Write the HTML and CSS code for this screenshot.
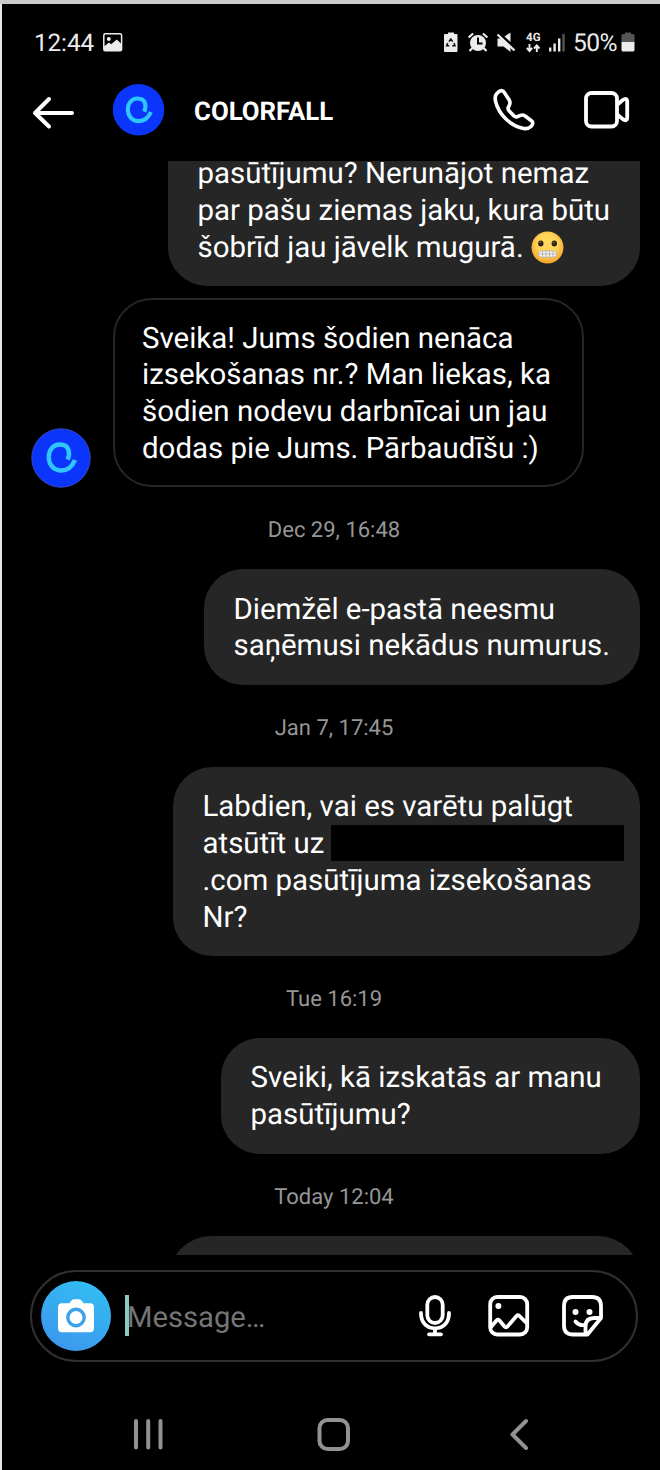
FILE: index.html
```html
<!DOCTYPE html>
<html lang="lv">
<head>
<meta charset="utf-8">
<title>COLORFALL</title>
<link rel="stylesheet" href="styles.css">
</head>
<body>
<div class="phone">
  <div class="status">
    <span class="clock">12:44</span>
    <svg class="status-photo" width="20" height="19" viewBox="0 0 20 19"><rect x=".8" y=".8" width="17.8" height="17" rx="1.6" fill="none" stroke="#ececec" stroke-width="1.5"/><circle cx="5.8" cy="6" r="2" fill="#ececec"/><path d="M1 13.5 6 9.5l2.2 1.800L13.800 6.500 18.500 11v7H1z" fill="#ececec"/></svg>
    <svg class="status-icons" width="130" height="24" viewBox="442 30 130 24" fill="#ececec">
      <path d="M448 34v-1.500h6V34h2.500q1 0 1 1v16q0 1-1 1h-11.500q-1 0-1-1V35q0-1 1-1z"/>
      <path d="M448.900 41.600l1.900-2.600 1.900 2.600M454 43l1 2.800h-2.800M447.600 43l-1 2.800h2.600" fill="none" stroke="#111" stroke-width="1.500"/>
      <circle cx="478" cy="43" r="8"/><path d="M468.600 37.500l4.500-4M487.400 37.500l-4.500-4M472.500 48l-3 3M483.500 48l3 3" stroke="#ececec" stroke-width="2.200"/>
      <path d="M478 37.500V43.500h4.500" fill="none" stroke="#000" stroke-width="2"/>
      <path d="M497.500 38.500h4l9 8.500v5l-7-5.500h-6z"/><path d="M504.500 36.500l6-4v9.500z"/><path d="M499 33.500L515.500 49" stroke="#000" stroke-width="1.600"/><path d="M497.500 34.500l17 16" stroke="#ececec" stroke-width="2.200"/>
      <text class="net" x="526" y="41.200" textLength="14.500">4G</text>
      <path d="M529.500 44v6M526.800 48l2.700 3 2.700-3M536.800 52v-6M534 48.500l2.800-3 2.700 3" fill="none" stroke="#ececec" stroke-width="1.900"/>
      <path d="M549 47.500h2.400v4H549zM553.400 43.500h2.400v8h-2.400zM558 38.500h2.400v13H558z"/><path d="M562.300 34h2.400v17.500h-2.400z" fill="#555"/>
    </svg>
    <span class="percent">50%</span>
    <svg class="battery" width="14" height="20" viewBox="0 0 14 20"><path d="M4 2V.5h6V2h2q1.500 0 1.500 1.500V10H.5V3.500Q.5 2 2 2z" fill="#555"/><path d="M.5 10h13v8q0 1.500-1.500 1.500H2Q.5 19.500.5 18z" fill="#ececec"/></svg>
  </div>

  <header class="header">
    <svg class="back" width="44" height="34" viewBox="0 0 44 34" fill="none" stroke="#fff" stroke-width="4" stroke-linecap="round" stroke-linejoin="round"><path d="M17 3 3 17l14 13.500M3 17h37"/></svg>
    <svg class="head-avatar" width="52" height="52" viewBox="0 0 60 60"><circle cx="30.600" cy="29.700" r="29.700" fill="#0b35fb"/><path d="M37.200 32C39.500 26.500 40 16.800 29.300 16.800 22.500 16.800 18.300 22.300 18.300 29.300c0 8 5.200 13.500 12.500 13.500 6.700 0 11.500-4.500 14-10.500" fill="none" stroke="#2fc7fb" stroke-width="4.700"/></svg>
    <h1 class="name">COLORFALL</h1>
    <svg class="call" width="44" height="44" viewBox="492 88 44 44" fill="none" stroke="#fff" stroke-width="3.600" stroke-linejoin="round"><path d="M502 90.700c-1.500-.3-3.400 1-5 2.600-1.900 2-2.200 5-1.400 8.200 3 12.600 14.600 24.500 28 27 2.900.5 5.400-.1 7.300-2 2.200-2.200 2.600-4.200.5-5.800l-6.300-4.700c-1.500-1.100-2.900-1.200-4.500-.6l-3.400 1.300c-1 .4-2.200.1-3.200-.8l-4.800-4.900c-1.200-1.300-1.500-2.400-.9-3.600l1.200-2.700c.8-1.800.5-3.500-.6-5.200l-4.600-7.100c-.6-.9-1.300-1.500-2.300-1.700z"/></svg>
    <svg class="video" width="48" height="40" viewBox="583 90 48 40" fill="none" stroke="#fff" stroke-width="3.800" stroke-linejoin="round"><rect x="586" y="93" width="31" height="33.500" rx="5.500"/><path d="M617.500 104.500l5-4.200c3-2.200 4.700-1.600 4.700 1.300v16c0 2.900-1.700 3.500-4.700 1.300l-5-4.200"/></svg>
  </header>

  <main class="chat">
    <div class="bubble sent first">pasūtījumu? Nerunājot nemaz<br>par pašu ziemas jaku, kura būtu<br>šobrīd jau jāvelk mugurā. <svg class="emoji" width="33" height="33" viewBox="0 0 33 33"><defs><radialGradient id="face" cx=".5" cy=".4" r=".6"><stop offset=".5" stop-color="#ffd65a"/><stop offset="1" stop-color="#f5a22c"/></radialGradient></defs><circle cx="16.500" cy="16.500" r="16" fill="url(#face)"/><ellipse cx="9.800" cy="12.500" rx="2.700" ry="3" fill="#302012"/><ellipse cx="23.300" cy="12.500" rx="2.700" ry="3" fill="#302012"/><circle cx="9.200" cy="11.500" r=".8" fill="#987"/><circle cx="22.700" cy="11.500" r=".8" fill="#987"/><rect x="7.500" y="19.800" width="18" height="6.400" rx="2.800" fill="#f4f4f4" stroke="#b9a98a" stroke-width=".8"/><path d="M8 23h17M11.500 20v6M15 20v6M18.500 20v6M22 20v6" stroke="#a9a9a9" stroke-width=".8"/></svg></div>
    <div class="incoming">
      <svg class="avatar" width="60" height="60" viewBox="0 0 60 60"><circle cx="30" cy="30" r="29.200" fill="#0b35fb" stroke="#3446c4"/><path d="M36.600 31.700C38.900 26.200 39.500 16.500 28.800 16.500 22 16.500 17.800 22 17.800 29c0 8 5.200 13.500 12.500 13.500 6.700 0 11.200-4.500 13.700-10.500" fill="none" stroke="#2fc7fb" stroke-width="4.500"/></svg>
      <div class="bubble received">Sveika! Jums šodien nenāca<br>izsekošanas nr.? Man liekas, ka<br>šodien nodevu darbnīcai un jau<br>dodas pie Jums. Pārbaudīšu :)</div>
    </div>
    <time class="date">Dec 29, 16:48</time>
    <div class="bubble sent w436">Diemžēl e-pastā neesmu<br>saņēmusi nekādus numurus.</div>
    <time class="date">Jan 7, 17:45</time>
    <div class="bubble sent w467">Labdien, vai es varētu palūgt<br><span class="redacted-line">atsūtīt uz<span class="redacted"></span></span>.com pasūtījuma izsekošanas<br>Nr?</div>
    <time class="date">Tue 16:19</time>
    <div class="bubble sent w419">Sveiki, kā izskatās ar manu<br>pasūtījumu?</div>
    <time class="date">Today 12:04</time>
    <div class="bubble sent next"></div>
  </main>

  <div class="composer">
    <div class="camera"><svg width="38" height="36" viewBox="0 0 38 36"><path d="M12.500 5.200 14 3q1.200-1.800 3-1.800h5q1.800 0 3 1.800l1.500 2.200H33q4 0 4 4v21q0 4-4 4H5q-4 0-4-4v-21q0-4 4-4z" fill="#fff"/><circle cx="19" cy="19.500" r="8.200" fill="none" stroke="#3da2ec" stroke-width="3.400"/></svg></div>
    <span class="caret"></span>
    <span class="placeholder">Message…</span>
    <svg class="tools" width="190" height="48" viewBox="416 1292 190 48" fill="none" stroke="#fff" stroke-width="3.800" stroke-linecap="round" stroke-linejoin="round">
      <rect x="427.300" y="1297" width="15.400" height="26" rx="7.700"/><path d="M421 1313c0 9 5 15.300 14 15.300s14-6.300 14-15.300M435 1329v5M429 1334.300h12"/>
      <rect x="490.200" y="1297" width="37" height="37.500" rx="7"/><circle cx="498.400" cy="1306" r="3" fill="#fff" stroke="none"/><path d="M491 1327l5.500-6.500q1.500-1.500 3 0l5 6q1.500 1.700 3 0l9-10.500q1.500-1.500 3 0l7 7"/>
      <path d="M601 1318v-12q0-9-9-9h-19.500q-8.500 0-8.500 9v19.500q0 9 9 9h14.500zM601 1318h-7q-8.500 0-8.500 8.500v7.500"/><path d="M575.500 1321.500q3.500 4.500 10 3.500"/><circle cx="575.500" cy="1312" r="3" fill="#fff" stroke="none"/><circle cx="589.500" cy="1312" r="3" fill="#fff" stroke="none"/>
    </svg>
  </div>

  <nav class="nav">
    <svg width="392" height="36" viewBox="132 1416 392 36" fill="none" stroke="#929292" stroke-width="4" stroke-linecap="round" stroke-linejoin="round"><path d="M136 1421v26.500M148.200 1421v26.500M160.500 1421v26.500M526 1421l-13.500 13.500 13.500 13.500"/><rect x="319.500" y="1420" width="28.500" height="29" rx="8"/></svg>
  </nav>
</div>
</body>
</html>
```
FILE: styles.css
```css
* { box-sizing: border-box; }
body {
  margin: 0;
  background: #d5d5d5;
  font-family: Roboto, "Noto Sans", sans-serif;
  text-rendering: geometricPrecision;
  color: #fff;
}
svg { display: block; flex: none; overflow: visible; }
.phone {
  width: 660px;
  height: 1470px;
  padding: 4px 0 0 2px;
  overflow: hidden;
  display: flex;
  flex-direction: column;
  background: linear-gradient(#000, #000) 2px 4px no-repeat, linear-gradient(#cbcbcb, #cbcbcb) 0 0 / 100% 4px no-repeat, #e4e8e8;
}
.status {
  height: 76px;
  padding: 0 25px 0 32px;
  display: flex;
  align-items: center;
  font-size: 24.3px;
  color: #ececec;
}
.clock { width: 60px; letter-spacing: -0.1px; white-space: nowrap; }
.status-photo { margin-left: 9px; }
.status-icons { margin-left: auto; }
.net { font-size: 11.5px; font-weight: 700; }
.percent { width: 45px; margin-left: 1px; padding-top: 2px; font-size: 24.6px; letter-spacing: -0.6px; white-space: nowrap; }
.battery { margin-left: 3px; }
.header {
  height: 81px;
  padding: 0 29px 0 30px;
  display: flex;
  align-items: center;
}
.back { margin-top: -16px; }
.head-avatar { margin: -22px 0 0 36px; }
.name { margin: -17px 0 0 30px; font-size: 25.8px; line-height: 36px; font-weight: 700; white-space: nowrap; }
.call { margin: -21px 0 0 auto; }
.video { margin: -21px 0 0 47px; }
.chat {
  height: 1094px;
  padding: 0 20px 0 29px;
  display: flex;
  flex-direction: column;
  overflow: hidden;
  flex: none;
}
.bubble {
  flex: none;
  padding: 22.5px 30px 19.5px 29.5px;
  border-radius: 39px;
  font-size: 29.45px;
  line-height: 36.8px;
  white-space: nowrap;
}
.sent { align-self: flex-end; background: #262626; }
.first { width: 472px; height: 125px; padding-top: 0; padding-bottom: 0; border-radius: 0 0 39px 39px; }
.first::before { content: ""; display: block; margin-top: -5px; }
.emoji { display: inline-block; margin: -6px 0 0 0; vertical-align: -7px; }
.incoming { display: flex; align-items: flex-end; margin-top: 12px; }
.avatar { margin-bottom: -1px; }
.received { width: 471px; margin-left: 22px; padding: 20.5px 27.5px 17.5px 27px; border: 2px solid #262626; }
.w436 { width: 436px; }
.w467 { width: 467px; }
.w419 { width: 419px; }
.date {
  height: 82px;
  flex: none;
  padding: 2px 3px 0 0;
  text-align: center;
  line-height: 84px;
  font-size: 22px;
  color: #969696;
}
.redacted-line { display: flex; height: 36.8px; }
.redacted { flex: none; width: 293px; height: 36px; margin: -1px 0 0 7px; background: #000; }
.next { width: 471px; height: 116px; border-radius: 42px; }
.composer {
  width: 608px;
  height: 92px;
  margin: 15px 0 0 28px;
  padding: 0 30px 0 9px;
  flex: none;
  display: flex;
  align-items: center;
  border: 2px solid #303030;
  border-radius: 46px;
}
.camera {
  width: 70px;
  height: 70px;
  display: grid;
  place-items: center;
  border-radius: 50%;
  background: linear-gradient(205deg, #31c1f2, #3e92ed);
}
.caret { width: 4px; height: 41px; margin: -1px 0 0 14px; background: #8cc9c0; }
.placeholder { margin-left: -2px; padding-top: 4px; font-size: 29.2px; color: #757575; }
.tools { margin-left: auto; }
.nav { flex: 1; padding: 6px 0 0 130px; display: flex; align-items: center; }
.nav svg { margin-top: 30px; }
```
